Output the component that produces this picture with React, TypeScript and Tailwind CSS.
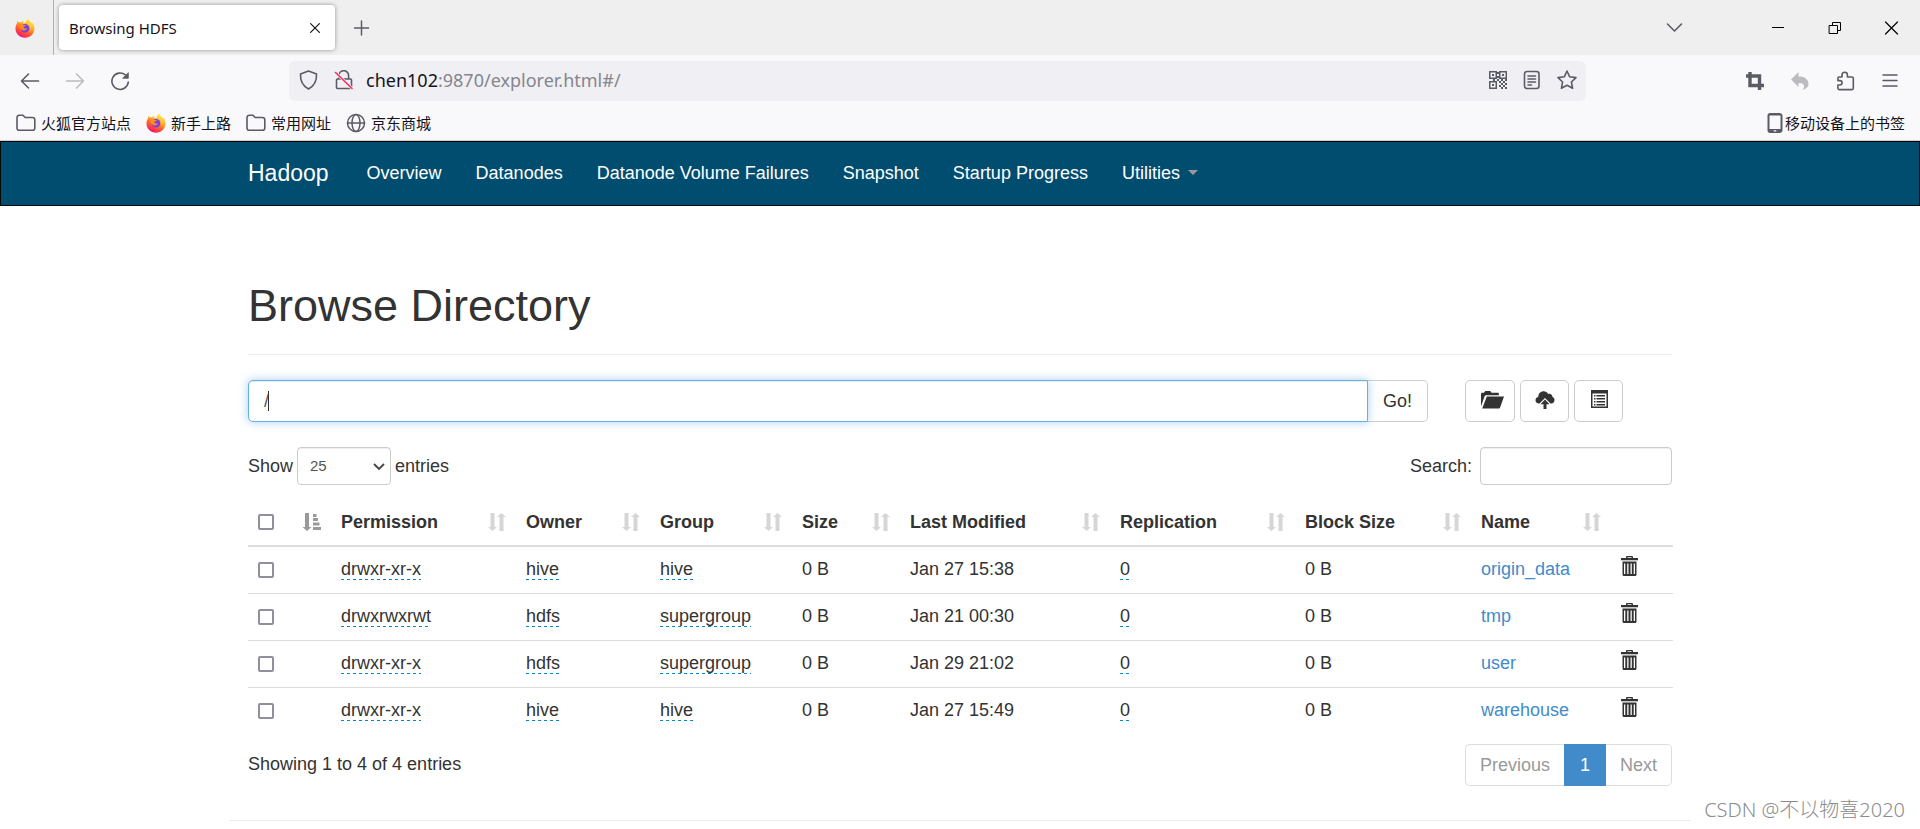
import { useState, type ReactNode } from "react"

type Entry = {
  permission: string
  owner: string
  group: string
  modified: string
  name: string
}

const entries: Entry[] = [
  { permission: "drwxr-xr-x", owner: "hive", group: "hive", modified: "Jan 27 15:38", name: "origin_data" },
  { permission: "drwxrwxrwt", owner: "hdfs", group: "supergroup", modified: "Jan 21 00:30", name: "tmp" },
  { permission: "drwxr-xr-x", owner: "hdfs", group: "supergroup", modified: "Jan 29 21:02", name: "user" },
  { permission: "drwxr-xr-x", owner: "hive", group: "hive", modified: "Jan 27 15:49", name: "warehouse" },
]

const columns = ["Permission", "Owner", "Group", "Size", "Last Modified", "Replication", "Block Size", "Name"]

const navLinks = ["Overview", "Datanodes", "Datanode Volume Failures", "Snapshot", "Startup Progress"]

function Line({ children, className = "size-5", width = 1.6 }: { children: ReactNode; className?: string; width?: number }) {
  return (
    <svg viewBox="0 0 20 20" className={className} fill="none" stroke="currentColor" strokeWidth={width} strokeLinecap="round" strokeLinejoin="round" aria-hidden="true">
      {children}
    </svg>
  )
}

function FirefoxLogo() {
  return (
    <svg viewBox="0 0 20 20" className="size-5" aria-hidden="true">
      <defs>
        <linearGradient id="fx-body" x1="0.8" y1="0.05" x2="0.3" y2="1">
          <stop offset="0" stopColor="#fff44f" />
          <stop offset="0.35" stopColor="#ffb22e" />
          <stop offset="0.6" stopColor="#ff6a2b" />
          <stop offset="0.85" stopColor="#ff2f4e" />
          <stop offset="1" stopColor="#e31587" />
        </linearGradient>
      </defs>
      <path d="M13 0.4c.3 1.4 1.3 2.2 2.4 3.1.5.5.9 1 1.2 1.6.3-.3.4-.8.4-1.2 1.6 1.8 2.5 4 2.5 6.6 0 5.2-4.2 9.2-9.5 9.2S.5 15.6.5 10.4c0-2.1.6-3.7 1.5-5.2 0-.9.2-1.8.7-2.5.2.7.5 1.2 1 1.6.8-.2 1.7-.2 2.4 0 .8-.9 1.7-1.3 2.7-1.5-.5.6-.9 1.3-.9 1.9l2.6.4C10.6 3.2 11.7 1.5 13 .4z" fill="url(#fx-body)" />
      <circle cx="10" cy="10.2" r="4.3" fill="#7a3fe0" />
      <path d="M4 6.3c1.8-.7 3.3-.3 4.3.7h2.5c.2.8-.9 1.3-1.9 1.6-.5.2-.4.9-.2 1.4 1 .8 2.4.1 3.4.6-.7 1.7-2.8 2.4-4.5 1.7C5.3 11.3 4 9 4 6.3z" fill="#ff8a26" />
      <path d="M12.5 5.2c2.6 1.2 3.8 4 2.8 6.8 2-2.4 1.6-5.7-.2-7.5z" fill="#ffd43a" />
    </svg>
  )
}

function FolderOutline() {
  return (
    <Line>
      <path d="M1 4.5A2.3 2.3 0 0 1 3.3 2.2H7l2.2 2.3h7.300a2.3 2.3 0 0 1 2.3 2.3v8.2a2.3 2.3 0 0 1-2.3 2.3H3.3A2.3 2.3 0 0 1 1 15z" />
    </Line>
  )
}

function QrIcon() {
  return (
    <svg viewBox="0 0 18 18" className="size-[18px]" fill="currentColor" aria-hidden="true">
      <path fillRule="evenodd" d="M0 0h8v8H0zM1.500 1.500v5h5v-5zM3 3h2v2H3zM10 0h8v8h-8zM11.500 1.500v5h5v-5zM13 3h2v2h-2zM0 10h8v8H0zM1.500 11.500v5h5v-5zM3 13h2v2H3z" />
      <path d="M8 1h2v2H8zM8 5h2v2H8zM8 8h2v2H8zM10 10h2v2h-2zM14 10h2v2h-2zM12 12h2v2h-2zM16 12h2v2h-2zM10 14h2v2h-2zM14 14h2v2h-2zM12 16h2v2h-2zM16 16h2v2h-2zM4 8h2v2H4zM12 8h2v2h-2zM16 8h2v2h-2z" />
    </svg>
  )
}

function SortBoth() {
  return (
    <svg viewBox="0 0 18 18" className="size-[18px] shrink-0 text-[#d6d6d6]" fill="currentColor" aria-hidden="true">
      <path d="M2.500 0h4v14H9l-4.500 4L0 14h2.500zM11.500 18h4V4H18l-4.500-4L9 4h2.500z" />
    </svg>
  )
}

function SortAsc() {
  return (
    <svg viewBox="0 0 18 18" className="size-[18px] shrink-0 text-[#999]" fill="currentColor" aria-hidden="true">
      <path d="M2 0h4v14h2.500L4 18-.5 14H2zM10 1h3.500v3H10zM10 5h5v3h-5zM10 9.500h6.500v3H10zM10 14h8v3h-8z" />
    </svg>
  )
}

function Trash() {
  return (
    <svg viewBox="0 0 17 20" className="h-5 w-[17px]" fill="currentColor" aria-hidden="true">
      <path fillRule="evenodd" d="M5 2V1.200C5 .5 5.500 0 6.200 0h4.600c.7 0 1.200.5 1.200 1.200V2h5v2.200H0V2zM6.500 2h4v-.7h-4zM1.500 5.500h14V18.500c0 .8-.6 1.500-1.400 1.500H2.900c-.8 0-1.400-.7-1.400-1.500zM3 7.500V18h1.300V7.500zM6.200 7.500V18h1.300V7.500zM9.500 7.500V18h1.300V7.500zM12.700 7.500V18H14V7.500z" />
    </svg>
  )
}

function Checkbox({ label }: { label: string }) {
  return (
    <input type="checkbox" aria-label={label} className="block size-4 shrink-0 appearance-none rounded-xs border-2 border-[#8f8f9d] bg-white checked:bg-[#0060df]" />
  )
}

function Editable({ children }: { children: ReactNode }) {
  return (
    <span className="bg-[linear-gradient(to_right,#0088cc_50%,transparent_50%)] bg-[length:6px_1px] bg-bottom-left bg-repeat-x pb-px">{children}</span>
  )
}

function BrowserChrome() {
  return (
    <header className="border-b border-[#ccc] bg-[#f9f9fb] font-['Noto_Sans','Noto_Sans_CJK_SC',sans-serif] text-[#5b5b66]">
      <div className="flex h-[55px] items-center bg-[#efefef]">
        <div className="flex h-full w-[54px] shrink-0 items-center border-r border-[#b0b0b0] pl-[15px]">
          <FirefoxLogo />
        </div>
        <div className="ml-[5px] flex h-[45px] w-[276px] items-center justify-between rounded bg-white pr-3 pl-[10px] text-[15px] text-[#15141a] shadow-[0_0_4px_rgba(0,0,0,0.4)]">
          <span>Browsing HDFS</span>
          <button type="button" aria-label="Close tab">
            <Line className="size-4" width={1.5}><path d="M4.500 4.500l11 11M15.500 4.500l-11 11" /></Line>
          </button>
        </div>
        <button type="button" aria-label="New tab" className="ml-4">
          <Line width={1.5}><path d="M10.500 3v14M3.500 10h14" /></Line>
        </button>
        <div className="ml-auto flex items-center pr-[19px] text-black">
          <button type="button" aria-label="List all tabs" className="mr-[84px] text-[#5b5b66]">
            <Line><path d="M2.500 6l7 7 7-7" /></Line>
          </button>
          <div className="flex gap-9">
            <button type="button" aria-label="Minimize">
              <Line width={1}><path d="M3 9.500h12" strokeLinecap="butt" /></Line>
            </button>
            <button type="button" aria-label="Restore">
              <Line width={1}><path d="M4.500 7.500h8v8h-8zM7.500 7.500v-3h8v8h-3" strokeLinejoin="miter" /></Line>
            </button>
            <button type="button" aria-label="Close window">
              <Line width={1.2}><path d="M4.500 4l12 12M16.500 4l-12 12" /></Line>
            </button>
          </div>
        </div>
      </div>

      <div className="flex h-[51px] items-center pr-5 pl-5">
        <div className="mr-[159px] flex shrink-0 gap-[25px]">
          <button type="button" aria-label="Back">
            <Line><path d="M18.500 10H1.500M8.500 3l-7 7 7 7" /></Line>
          </button>
          <button type="button" aria-label="Forward" className="text-[#bbbbc0]">
            <Line><path d="M1.500 10h17M11.500 3l7 7-7 7" /></Line>
          </button>
          <button type="button" aria-label="Reload">
            <Line>
              <path d="M18.300 11A8.200 8.200 0 1 1 15.500 4" />
              <path d="M18.300 2v5.300H13z" fill="currentColor" strokeWidth="0.8" />
            </Line>
          </button>
        </div>
        <div className="flex h-10 flex-1 items-center rounded-md bg-[#f0f0f4] px-[9px] pb-px">
          <Line><path d="M10.500 1l8 3c.3 6-1.500 11.500-8 15C4 15.500 2.200 10 2.500 4z" /></Line>
          <Line className="ml-4 size-5">
            <path d="M5 9V5.500a4.800 4.800 0 0 1 9.600 0V9M3.500 9h13c.6 0 1 .4 1 1v7.500c0 .6-.4 1-1 1h-13c-.6 0-1-.4-1-1V10c0-.6.4-1 1-1z" />
            <path d="M1.500 2.500l16.500 16" stroke="#f0f0f4" strokeWidth="3" />
            <path d="M1.500 2.500l16.500 16" stroke="#ff2a5c" />
          </Line>
          <span className="ml-3 flex-1 text-[18px] text-[#15141a]">
            chen102<span className="text-[#85858d]">:9870/explorer.html#/</span>
          </span>
          <div className="flex items-center gap-[15px]">
            <QrIcon />
            <Line>
              <rect x="2.500" y="1.500" width="14.500" height="17" rx="2.500" />
              <path d="M6 6h7.500M6 9h7.500M6 12h7.500M6 15h3.500" width="1" />
            </Line>
            <Line>
              <path d="M10 1l2.700 5.800 6.300.8-4.600 4.400 1.200 6.300L10 15.300l-5.600 3 1.200-6.300L1 7.600l6.300-.8z" />
            </Line>
          </div>
        </div>
        <div className="ml-[159px] flex shrink-0 items-center gap-[25px]">
          <Line width={3.4}>
            <path d="M1 5h13.500v14M5 1v13.500h14" strokeLinecap="butt" strokeLinejoin="miter" />
          </Line>
          <svg viewBox="0 0 20 20" className="size-5 text-[#bbbbc0]" fill="currentColor" aria-hidden="true">
            <path d="M8.500 1v4.500c6 0 10 2.500 10 7.500 0 2.500-2 4.800-6 6 3-3.500 2-7-4-7V16L1 8.500z" />
          </svg>
          <Line>
            <path d="M4 6h3V4a2.700 2.700 0 0 1 5.400 0v2h4.600c.8 0 1.300.5 1.300 1.300v10c0 .8-.5 1.300-1.300 1.300H4.200c-.8 0-1.300-.5-1.300-1.300v-3.300h2a2.200 2.200 0 0 0 0-4.400h-2V7.200c0-.7.4-1.200 1.100-1.200z" />
          </Line>
          <Line width={1.5}><path d="M3 4h14M3 9.500h14M3 15h14" /></Line>
        </div>
      </div>

      <div className="flex h-[34px] items-center justify-between pr-[15px] pb-px pl-4 text-[15px]">
        <div className="flex gap-[15px]">
          <a href="#/" className="flex items-center gap-[5px]"><FolderOutline /><span className="text-[#15141a]">火狐官方站点</span></a>
          <a href="#/" className="flex items-center gap-[5px]"><FirefoxLogo /><span className="text-[#15141a]">新手上路</span></a>
          <a href="#/" className="flex items-center gap-[5px]"><FolderOutline /><span className="text-[#15141a]">常用网址</span></a>
          <a href="#/" className="flex items-center gap-[5px]">
            <Line width={1.5}>
              <circle cx="10" cy="10" r="8.500" />
              <ellipse cx="10" cy="10" rx="4" ry="8.500" />
              <path d="M1.500 10h17" />
            </Line>
            <span className="text-[#15141a]">京东商城</span>
          </a>
        </div>
        <a href="#/" className="flex items-center">
          <svg viewBox="0 0 18 20" className="h-5 w-[18px]" fill="currentColor" aria-hidden="true">
            <path fillRule="evenodd" d="M3 0h9.500C14 0 15.500 1 15.500 2.500v15c0 1.500-1.500 2.500-3 2.500H3C1.500 20 .5 19 .5 17.500v-15C.5 1 1.500 0 3 0zM2.500 2.500v13.500h11V2.500zM6.700 17.300v1.200h2.600v-1.200z" />
          </svg>
          <span className="text-[#15141a]">移动设备上的书签</span>
        </a>
      </div>
    </header>
  )
}

function Navbar() {
  return (
    <nav className="border border-[#080808] bg-[#014d70] text-white">
      <div className="mx-auto flex h-[63px] max-w-[1462px] items-center px-[19px] pb-[2px]">
        <a href="#/" className="mr-[38px] text-[23px]">Hadoop</a>
        <div className="flex gap-[34px]">
          {navLinks.map((link) => (
            <a key={link} href="#/">{link}</a>
          ))}
          <a href="#/" className="flex items-center gap-2">
            Utilities
            <svg viewBox="0 0 10 5" className="h-[5px] w-[10px] text-[#999]" fill="currentColor" aria-hidden="true"><path d="M0 0h10L5 5z" /></svg>
          </a>
        </div>
      </div>
    </nav>
  )
}

function PathBar() {
  const [path, setPath] = useState("/")

  return (
    <div className="flex gap-[37px]">
      <div className="flex flex-1">
        <div className="relative flex-1">
          <input
            aria-label="Directory path"
            value={path}
            onChange={(e) => setPath(e.target.value)}
            className="block h-[42px] w-full rounded-l-[5px] border border-[#66afe9] bg-white px-[15px] text-[#555] shadow-[inset_0_1px_1px_rgba(0,0,0,0.075),0_0_10px_rgba(102,175,233,0.6)] outline-none"
          />
          {/* text cursor */}
          <span className="absolute top-[11px] left-5 h-5 w-px bg-[#333]" />
        </div>
        <button type="button" className="h-[42px] rounded-r-[5px] border border-l-0 border-[#ccc] bg-white px-[15px]">Go!</button>
      </div>
      <div className="flex w-[207px] gap-[5px]">
        <button type="button" aria-label="Create directory" className="flex h-[42px] w-[50px] rounded-[5px] border border-[#ccc] bg-white pt-[10px] pl-[15px]">
          <svg viewBox="0 0 23 18" className="h-[18px] w-[23px]" fill="currentColor" aria-hidden="true">
            <path d="M0 15.500V3c0-.8.6-1.300 1.300-1.300H3L4.300 0h5l1.200 1.700h6.200c.7 0 1.200.5 1.200 1.200v1.400H5.300c-.9 0-1.400.5-1.800 1.300zM5.800 5.500H23l-3.800 10.700c-.3.8-.7 1.300-1.500 1.300H1.200z" />
          </svg>
        </button>
        <button type="button" aria-label="Upload files" className="flex h-[42px] w-[49px] rounded-[5px] border border-[#ccc] bg-white pt-[10px] pl-[14px]">
          <svg viewBox="0 0 20 18" className="h-[18px] w-5" fill="currentColor" aria-hidden="true">
            <path d="M4 12.500C1.800 12.500.5 11 .5 9.200c0-1.700 1.300-3 2.800-3.200C3.300 2.500 5.700.3 8.600.3c2 0 3.600 1 4.500 2.600 2.500-.6 4.400 1 4.400 3.200 1.200.4 2 1.500 2 3 0 1.900-1.300 3.400-3.200 3.400h-.8L10 7 4.500 12.500z" />
            <path d="M10 8.500l4.500 4.700h-3V18h-3v-4.800h-3z" />
          </svg>
        </button>
        <button type="button" aria-label="Cut and paste" className="flex h-[42px] w-[49px] rounded-[5px] border border-[#ccc] bg-white pt-[9px] pl-4">
          <svg viewBox="0 0 17 18" className="h-[18px] w-[17px]" fill="currentColor" aria-hidden="true">
            <path fillRule="evenodd" d="M0 0h17v18H0zM1.500 3.500v13h14v-13z" />
            <path d="M3 5h1.500v1.500H3zM3 8h1.500v1.500H3zM3 11h1.500v1.500H3zM3 14h1.500v1.500H3zM5.500 5H14v1.500H5.500zM5.500 8H14v1.500H5.500zM5.500 11H14v1.500H5.500zM5.500 14H14v1.500H5.500z" />
          </svg>
        </button>
      </div>
    </div>
  )
}

function TableControls() {
  return (
    <div className="mt-[25px] flex items-center justify-between">
      <label className="flex items-center gap-1">
        Show
        <span className="relative">
          <select defaultValue="25" className="block h-[38px] w-[94px] appearance-none rounded border border-[#ccc] bg-white px-3 text-[15px] text-[#555] shadow-[inset_0_1px_1px_rgba(0,0,0,0.075)]">
            <option>10</option>
            <option>25</option>
            <option>50</option>
            <option>100</option>
          </select>
          <svg viewBox="0 0 12 8" className="pointer-events-none absolute top-[16px] right-[6px] h-2 w-3 text-[#444]" fill="none" stroke="currentColor" strokeWidth="1.8" aria-hidden="true">
            <path d="M1 1l5 5 5-5" />
          </svg>
        </span>
        entries
      </label>
      <label className="flex items-center gap-2">
        Search:
        <input type="search" className="h-[38px] w-[192px] rounded border border-[#ccc] bg-white px-3 text-[15px] shadow-[inset_0_1px_1px_rgba(0,0,0,0.075)]" />
      </label>
    </div>
  )
}

function FileTable() {
  return (
    <table className="mt-[14px] w-full table-fixed border-collapse text-left">
      <colgroup>
        <col className="w-[83px]" />
        <col className="w-[185px]" />
        <col className="w-[134px]" />
        <col className="w-[142px]" />
        <col className="w-[108px]" />
        <col className="w-[210px]" />
        <col className="w-[185px]" />
        <col className="w-[176px]" />
        <col className="w-[140px]" />
        <col className="w-[62px]" />
      </colgroup>
      <thead>
        <tr className="border-b-2 border-[#ddd]">
          <th className="p-[10px]">
            <span className="flex items-center justify-between">
              <Checkbox label="Select all" />
              <SortAsc />
            </span>
          </th>
          {columns.map((column) => (
            <th key={column} className="p-[10px]">
              <button type="button" className="flex w-full items-center justify-between font-bold whitespace-nowrap">
                {column}
                <SortBoth />
              </button>
            </th>
          ))}
          <th className="p-[10px]" />
        </tr>
      </thead>
      <tbody>
        {entries.map((entry) => (
          <tr key={entry.name} className="border-b border-[#ddd] last:border-b-0">
            <td className="px-[10px]"><Checkbox label={entry.name} /></td>
            <td className="px-[10px] pt-[9px] pb-[11px]"><Editable>{entry.permission}</Editable></td>
            <td className="px-[10px] pt-[9px] pb-[11px]"><Editable>{entry.owner}</Editable></td>
            <td className="px-[10px] pt-[9px] pb-[11px]"><Editable>{entry.group}</Editable></td>
            <td className="px-[10px] pt-[9px] pb-[11px]">0 B</td>
            <td className="px-[10px] pt-[9px] pb-[11px]">{entry.modified}</td>
            <td className="px-[10px] pt-[9px] pb-[11px]"><Editable>0</Editable></td>
            <td className="px-[10px] pt-[9px] pb-[11px]">0 B</td>
            <td className="px-[10px] pt-[9px] pb-[11px]"><a href="#/" className="text-[#428bca]">{entry.name}</a></td>
            <td className="px-[10px] align-top">
              <button type="button" aria-label={`Delete ${entry.name}`} className="mt-[9px] block"><Trash /></button>
            </td>
          </tr>
        ))}
      </tbody>
    </table>
  )
}

export default function App() {
  return (
    <div className="relative min-h-screen bg-white font-['Liberation_Sans',Arial,sans-serif] text-[18px] leading-[26px] text-[#333]">
      <BrowserChrome />
      <Navbar />

      <main className="mx-auto max-w-[1462px] pt-[75px]">
        <div className="px-[19px]">
          <h1 className="mb-[25px] border-b border-[#eee] pb-[23px] text-[45px] leading-[50px]">Browse Directory</h1>
          <PathBar />
          <TableControls />
          <FileTable />
          <div className="mt-[10px] flex items-start justify-between">
            <p className="pt-[7px]">Showing 1 to 4 of 4 entries</p>
            <div className="flex text-[#999]">
              <button type="button" disabled className="h-[42px] rounded-l-[5px] border border-r-0 border-[#ddd] px-[14px]">Previous</button>
              <button type="button" aria-current="page" className="h-[42px] bg-[#428bca] px-4 text-white">1</button>
              <button type="button" disabled className="h-[42px] rounded-r-[5px] border border-l-0 border-[#ddd] px-[14px]">Next</button>
            </div>
          </div>
        </div>
        <hr className="mt-[34px] border-[#eee]" />
      </main>

      <span className="absolute right-[15px] bottom-[6px] font-['Noto_Sans','Noto_Sans_CJK_SC',sans-serif] text-[20px] font-light text-[#8c8c8c]">CSDN @不以物喜2020</span>
    </div>
  )
}
